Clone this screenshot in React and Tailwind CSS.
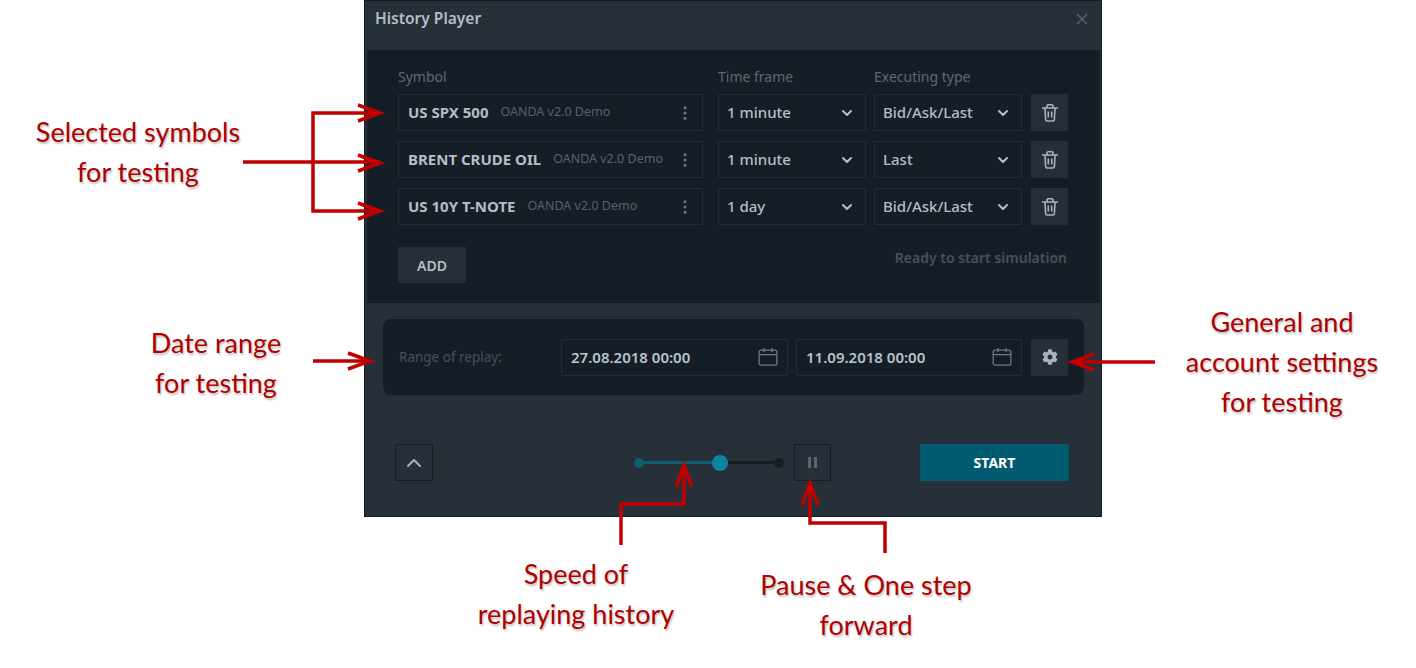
import { ChevronDown, ChevronUp, EllipsisVertical, X } from 'lucide-react'
import { FaCog } from 'react-icons/fa'

const rows = [
  { symbol: 'US SPX 500', frame: '1 minute', type: 'Bid/Ask/Last' },
  { symbol: 'BRENT CRUDE OIL', frame: '1 minute', type: 'Last' },
  { symbol: 'US 10Y T-NOTE', frame: '1 day', type: 'Bid/Ask/Last' },
]

const ui = { fontFamily: '"Noto Sans", sans-serif' }

function TrashIcon() {
  return (
    <svg width="20" height="20" viewBox="0 0 20 20" fill="none" stroke="#aab4be" strokeWidth="1.6">
      <path d="M2 5h16M5 5l.6 11.5a1.6 1.6 0 0 0 1.6 1.5h5.6a1.6 1.6 0 0 0 1.6-1.5L15 5M7 5V3a1.2 1.2 0 0 1 1.2-1.2h3.6A1.2 1.2 0 0 1 13 3v2M8.3 8.5v6M11.7 8.5v6" />
    </svg>
  )
}

function CalendarIcon() {
  return (
    <svg width="20" height="20" viewBox="0 0 20 20" fill="none" stroke="#6d7883" strokeWidth="1.3">
      <rect x="1.2" y="3.2" width="17.6" height="15" rx="2" />
      <path d="M1.2 7.6h17.6M6 1v4M14 1v4" />
    </svg>
  )
}

function SelectBox({ value }) {
  return (
    <div className="w-[148px] h-[37px] flex items-center justify-between pl-[8px] pr-[10px] border border-[#242c35] rounded-[1px] text-[15px] font-medium text-[#b4bec8]">
      <span>{value}</span>
      <ChevronDown size={16} strokeWidth={3} className="text-[#b4bec8]" />
    </div>
  )
}

function DateBox({ value, width }) {
  return (
    <div className={`${width} h-[37px] flex items-center justify-between pl-[9px] pr-[9px] border border-[#242c35] rounded-[1px] text-[15px] font-semibold text-[#b9c3cd]`}>
      <span>{value}</span>
      <CalendarIcon />
    </div>
  )
}

function Callout({ className, lines }) {
  return (
    <div className={`absolute text-center text-[27px] leading-[40px] whitespace-nowrap text-[#b00000] font-['Lato',sans-serif] [text-shadow:1px_2px_2px_rgba(0,0,0,0.25)] -translate-x-1/2 ${className}`}>
      {lines.map((l) => <div key={l}>{l}</div>)}
    </div>
  )
}

function Arrows() {
  const heads = [
    'M358 105l22 8-22 8', 'M358 155l22 8-22 8', 'M358 203l22 8-22 8',
    'M348 353l22 8-22 8', 'M1094 354l-22 8 22 8',
    'M676 487l8-22 8 22', 'M802 505l8-22 8 22',
  ]
  return (
    <svg className="absolute inset-0" width="1416" height="668" fill="none" stroke="#c00000" strokeWidth="3.5">
      <path d="M380 113H313V211H380M243 162H380M313 361H370M1155 362H1072M621 545V504H684V465M885 553V523H810V483" />
      {heads.map((d) => <path key={d} d={d} />)}
    </svg>
  )
}

export default function App() {
  return (
    <div className="relative w-[1416px] h-[668px] bg-white overflow-hidden" style={ui}>
      {/* Player window */}
      <div className="ml-[364px] w-[738px] h-[517px] bg-[#272f38] border border-[#141b22] flex flex-col">
        <div className="h-[49px] shrink-0 flex items-start justify-between pl-[10px] pr-[10px] pt-[6px]">
          <span className="text-[15.5px] font-semibold text-[#b4bec8]">History Player</span>
          <X size={18} strokeWidth={1.5} className="mt-[3px] text-[#5f6a75]" />
        </div>

        {/* Symbols */}
        <div className="ml-[2px] w-[733px] h-[253px] shrink-0 bg-[#151e27] pl-[31px] pr-[32px] pt-[17px]">
          <div className="flex h-[20px] mb-[7px] text-[14px] text-[#5d6873] leading-[20px]">
            <span className="w-[320px]">Symbol</span>
            <span className="w-[156px]">Time frame</span>
            <span>Executing type</span>
          </div>
          <div className="flex flex-col gap-[10px]">
            {rows.map((r) => (
              <div key={r.symbol} className="flex items-center">
                <div className="w-[305px] h-[37px] flex items-center pl-[9px] pr-[8px] border border-[#242c35] rounded-[1px]">
                  <span className="shrink-0 text-[15px] font-bold text-[#b4bec8] whitespace-nowrap">{r.symbol}</span>
                  <span className="ml-[12px] flex-1 overflow-hidden whitespace-nowrap text-[12.5px] text-[#56616c]">OANDA v2.0 Demo</span>
                  <EllipsisVertical size={18} strokeWidth={2} className="shrink-0 ml-[2px] text-[#6d7883]" />
                </div>
                <div className="ml-[15px]"><SelectBox value={r.frame} /></div>
                <div className="ml-[8px]"><SelectBox value={r.type} /></div>
                <div className="ml-[9px] w-[37px] h-[37px] flex items-center justify-center bg-[#262e37] rounded-[1px]"><TrashIcon /></div>
              </div>
            ))}
          </div>
          <div className="mt-[22px] flex items-start justify-between">
            <button className="w-[68px] h-[36px] bg-[#262e37] text-[14px] font-semibold text-[#b4bec8] rounded-[1px]">ADD</button>
            <span className="pr-[1px] text-[14px] font-semibold text-[#46515b]">Ready to start simulation</span>
          </div>
        </div>

        {/* Date range */}
        <div className="mt-[16px] ml-[18px] w-[701px] h-[76px] shrink-0 flex items-center bg-[#151e27] rounded-[8px] pl-[16px]">
          <span className="w-[162px] text-[13.5px] text-[#46515b]">Range of replay:</span>
          <DateBox value="27.08.2018 00:00" width="w-[227px]" />
          <div className="ml-[8px]"><DateBox value="11.09.2018 00:00" width="w-[226px]" /></div>
          <div className="ml-[9px] w-[37px] h-[37px] flex items-center justify-center bg-[#262e37] rounded-[1px]">
            <FaCog size={16} className="text-[#aab4be]" />
          </div>
        </div>

        {/* Controls */}
        <div className="mt-[49px] ml-[30px] flex items-center">
          <div className="w-[38px] h-[37px] flex items-center justify-center border border-[#161d25] rounded-[1px]">
            <ChevronUp size={24} strokeWidth={2} className="text-[#aab4be]" />
          </div>
          {/* Speed slider */}
          <div className="ml-[201px] w-[150px] flex items-center">
            <span className="w-[10px] h-[10px] rounded-full bg-[#0b5f74] shrink-0" />
            <span className="w-[72px] h-[3px] bg-[#0b5f74]" />
            <span className="w-[16px] h-[16px] rounded-full bg-[#0b85a3] shrink-0" />
            <span className="w-[49px] h-[3px] bg-[#151c24]" />
            <span className="w-[10px] h-[10px] rounded-full bg-[#151c24] shrink-0" />
          </div>
          <div className="ml-[10px] w-[37px] h-[37px] flex items-center justify-center gap-[3px] border border-[#161d25] rounded-[1px]">
            <span className="w-[3px] h-[11px] bg-[#59646f]" />
            <span className="w-[3px] h-[11px] bg-[#59646f]" />
          </div>
          <button className="ml-[89px] w-[149px] h-[37px] bg-[#005a70] text-[14px] font-bold text-white">START</button>
        </div>
      </div>

      {/* Annotations */}
      <Arrows />
      <Callout className="left-[138px] top-[112px]" lines={['Selected symbols', 'for testing']} />
      <Callout className="left-[216px] top-[323px]" lines={['Date range', 'for testing']} />
      <Callout className="left-[1282px] top-[302px]" lines={['General and', 'account settings', 'for testing']} />
      <Callout className="left-[576px] top-[554px]" lines={['Speed of', 'replaying history']} />
      <Callout className="left-[866px] top-[565px]" lines={['Pause & One step', 'forward']} />
    </div>
  )
}
